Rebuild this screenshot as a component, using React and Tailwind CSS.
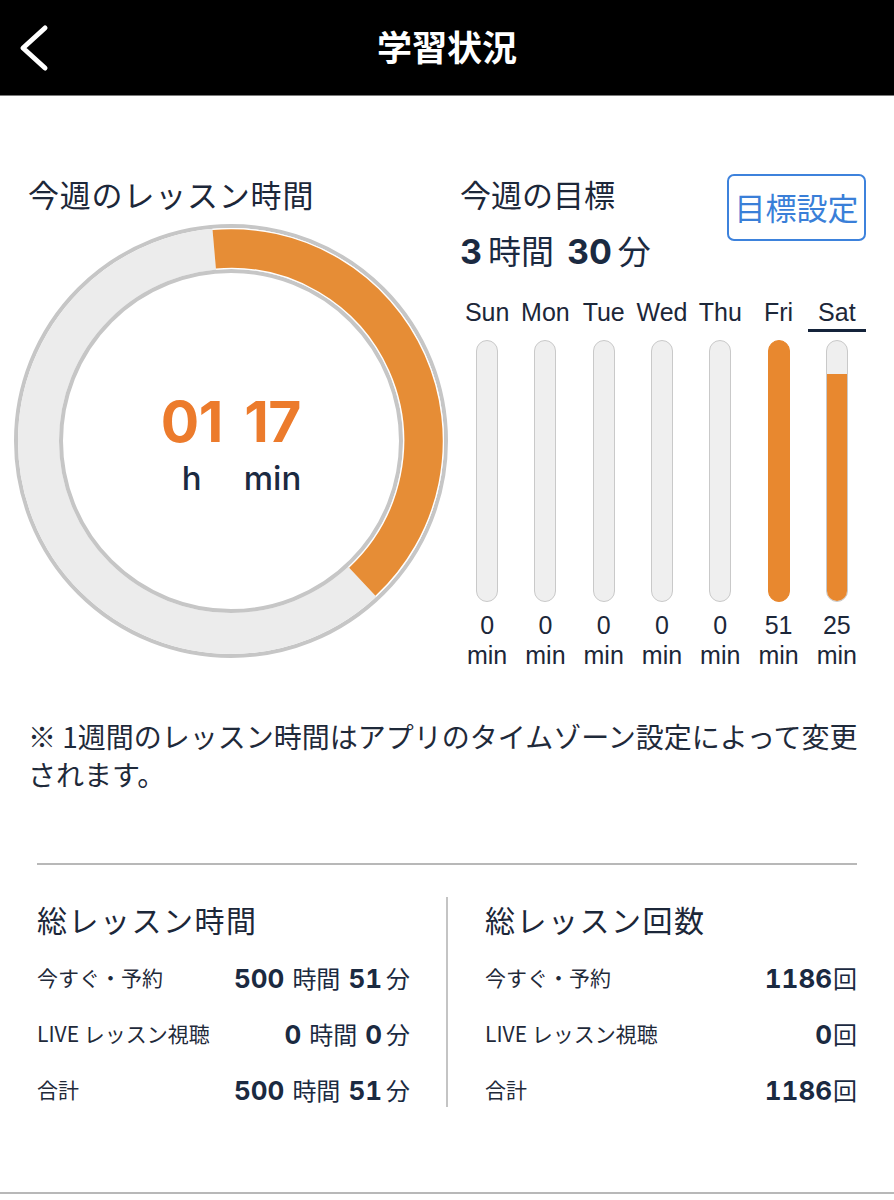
import React from "react";

const JP = { fontFamily: '"Noto Sans CJK JP", "Noto Sans", sans-serif' };
const LAT = { fontFamily: '"Liberation Sans", "Noto Sans CJK JP", sans-serif' };
const NUM = { fontFamily: 'Inter, "Noto Sans CJK JP", sans-serif' };

const days = [
  { d: "Sun", v: 0, fill: 0 },
  { d: "Mon", v: 0, fill: 0 },
  { d: "Tue", v: 0, fill: 0 },
  { d: "Wed", v: 0, fill: 0 },
  { d: "Thu", v: 0, fill: 0 },
  { d: "Fri", v: 51, fill: 266 },
  { d: "Sat", v: 25, fill: 229, today: true },
];

function Ring() {
  return (
    <svg width="440" height="440" viewBox="0 0 440 440" className="block">
      <circle cx="220" cy="220" r="215" fill="none" stroke="#c6c6c6" strokeWidth="4" />
      <circle cx="220" cy="220" r="192.5" fill="none" stroke="#ececec" strokeWidth="41" />
      <circle cx="220" cy="220" r="170" fill="#fff" stroke="#c6c6c6" strokeWidth="4" />
      <path
        d="M 203.22 28.23 A 192.5 192.5 0 0 1 351.28 360.78"
        fill="none"
        stroke="#ffffff"
        strokeWidth="41"
      />
      <path
        d="M 203.22 28.23 A 192.5 192.5 0 0 1 351.28 360.78"
        fill="none"
        stroke="#e68d36"
        strokeWidth="38.5"
      />
    </svg>
  );
}

function ValueTime({ h, m }) {
  return (
    <div className="flex items-baseline text-[#1b2a41]">
      <span style={NUM} className="text-[26px] font-bold tabular-nums">{h}</span>
      <span style={JP} className="text-[24px] ml-[8px]">時間</span>
      <span style={NUM} className="text-[26px] font-bold tabular-nums ml-[8px]">{m}</span>
      <span style={JP} className="text-[24px] ml-[4px]">分</span>
    </div>
  );
}

function ValueCount({ n }) {
  return (
    <div className="flex items-baseline text-[#1b2a41]">
      <span style={NUM} className="text-[26px] font-bold tabular-nums">{n}</span>
      <span style={JP} className="text-[24px] ml-[1px]">回</span>
    </div>
  );
}

function Row({ label, children }) {
  return (
    <div className="h-[56px] flex items-center justify-between">
      <span style={JP} className="text-[21px] text-[#1f2a3a]">{label}</span>
      {children}
    </div>
  );
}

export default function App() {
  return (
    <div className="w-[894px] h-[1200px] bg-white overflow-hidden" style={JP}>
      {/* Header */}
      <div className="h-[96px] bg-black border-b border-[#7a7a7a] grid grid-cols-[1fr_auto_1fr] items-center">
        <div className="pl-[18px] flex items-center">
          <svg width="32" height="50" viewBox="0 0 32 50">
            <polyline
              points="27,5 5,25 27,45"
              fill="none"
              stroke="#fff"
              strokeWidth="5"
              strokeLinecap="round"
              strokeLinejoin="round"
            />
          </svg>
        </div>
        <div style={JP} className="text-white text-[35px] font-bold leading-none mb-[4px]">
          学習状況
        </div>
        <div />
      </div>

      {/* Top section */}
      <div className="flex pt-[79px]">
        <div className="w-[458px] shrink-0">
          <div style={JP} className="pl-[28px] text-[31px] leading-[37px] tracking-[0.8px] text-[#1c2739]">
            今週のレッスン時間
          </div>
          <div className="ml-[11px] mt-[9px] relative w-[440px] h-[440px]">
            <Ring />
            <div className="absolute inset-0 flex items-center justify-center">
              <div className="flex gap-[21px] mt-[8px]">
                <div className="flex flex-col items-center">
                  <span style={NUM} className="text-[57px] font-bold leading-[60px] text-[#ec7b2c] tracking-[-0.5px]">01</span>
                  <span style={NUM} className="text-[33px] font-medium leading-[40px] text-[#1b2a41] mt-[6px]">h</span>
                </div>
                <div className="flex flex-col items-center">
                  <span style={NUM} className="text-[57px] font-bold leading-[60px] text-[#ec7b2c] tracking-[-0.5px]">17</span>
                  <span style={NUM} className="text-[33px] font-medium leading-[40px] text-[#1b2a41] mt-[6px]">min</span>
                </div>
              </div>
            </div>
          </div>
        </div>

        <div className="w-[408px] shrink-0">
          <div className="flex justify-between items-start">
            <div className="pl-[2px]">
              <div style={JP} className="text-[31px] leading-[37px] text-[#1c2739]">今週の目標</div>
              <div className="flex items-baseline mt-[19px] leading-[38px] text-[#1b2a41]">
                <span style={NUM} className="text-[34px] font-bold">3</span>
                <span style={JP} className="text-[33px] ml-[6px]">時間</span>
                <span style={NUM} className="text-[34px] font-bold ml-[13px]">30</span>
                <span style={JP} className="text-[33px] ml-[6px]">分</span>
              </div>
            </div>
            <div
              style={JP}
              className="mt-[-1px] w-[139px] h-[67px] border-2 border-[#3d82dc] rounded-[7px] flex items-center justify-center text-[31px] text-[#3a7fd8]"
            >
              目標設定
            </div>
          </div>

          <div className="flex mt-[27px]">
            {days.map((x) => (
              <div key={x.d} className="w-[58.3px] flex flex-col items-center">
                <div style={LAT} className="text-[25px] leading-[28px] text-[#1c2739]">{x.d}</div>
                <div className={x.today ? "w-full h-[3px] mt-[3px] bg-[#14233a]" : "w-full h-[3px] mt-[3px]"} />
                <div
                  className={
                    x.fill >= 266
                      ? "mt-[8px] relative w-[22px] h-[262px] rounded-full overflow-hidden border-[1.5px] border-[#e8882f] bg-[#e8882f]"
                      : "mt-[8px] relative w-[22px] h-[262px] rounded-full overflow-hidden border-[1.5px] border-[#c9c9c9] bg-[#efefef]"
                  }
                >
                  {x.fill > 0 && (
                    <div
                      className="absolute left-[-2px] right-[-2px] bottom-[-2px] bg-[#e8882f]"
                      style={{ height: x.fill }}
                    />
                  )}
                </div>
                <div style={LAT} className="mt-[8px] text-[25px] leading-[30px] text-[#1c2739] text-center">
                  {x.v}
                  <br />
                  min
                </div>
              </div>
            ))}
          </div>
        </div>
      </div>

      {/* Note */}
      <div style={JP} className="pl-[28px] pr-[20px] mt-[47px] text-[28px] leading-[38px] text-[#1f2a3a] whitespace-nowrap">
        ※ 1週間のレッスン時間はアプリのタイムゾーン設定によって変更
        <br />
        されます。
      </div>

      {/* Divider */}
      <div className="mx-[37px] mt-[70px] h-[2px] bg-[#b8b8b8]" />

      {/* Totals */}
      <div className="flex mt-[32px]">
        <div className="ml-[37px] w-[373px] pt-[4px]">
          <div style={JP} className="text-[30px] leading-[36px] tracking-[1.5px] text-[#1c2739]">総レッスン時間</div>
          <div className="mt-[13px]">
            <Row label="今すぐ・予約"><ValueTime h="500" m="51" /></Row>
            <Row label="LIVE レッスン視聴"><ValueTime h="0" m="0" /></Row>
            <Row label="合計"><ValueTime h="500" m="51" /></Row>
          </div>
        </div>
        <div className="ml-[36px] w-[2px] h-[210px] bg-[#c4c4c4]" />
        <div className="ml-[37px] w-[372px] pt-[4px]">
          <div style={JP} className="text-[30px] leading-[36px] tracking-[1.5px] text-[#1c2739]">総レッスン回数</div>
          <div className="mt-[13px]">
            <Row label="今すぐ・予約"><ValueCount n="1186" /></Row>
            <Row label="LIVE レッスン視聴"><ValueCount n="0" /></Row>
            <Row label="合計"><ValueCount n="1186" /></Row>
          </div>
        </div>
      </div>

      <div className="mt-[74px] h-[2px] bg-[#b8b8b8]" />
    </div>
  );
}
